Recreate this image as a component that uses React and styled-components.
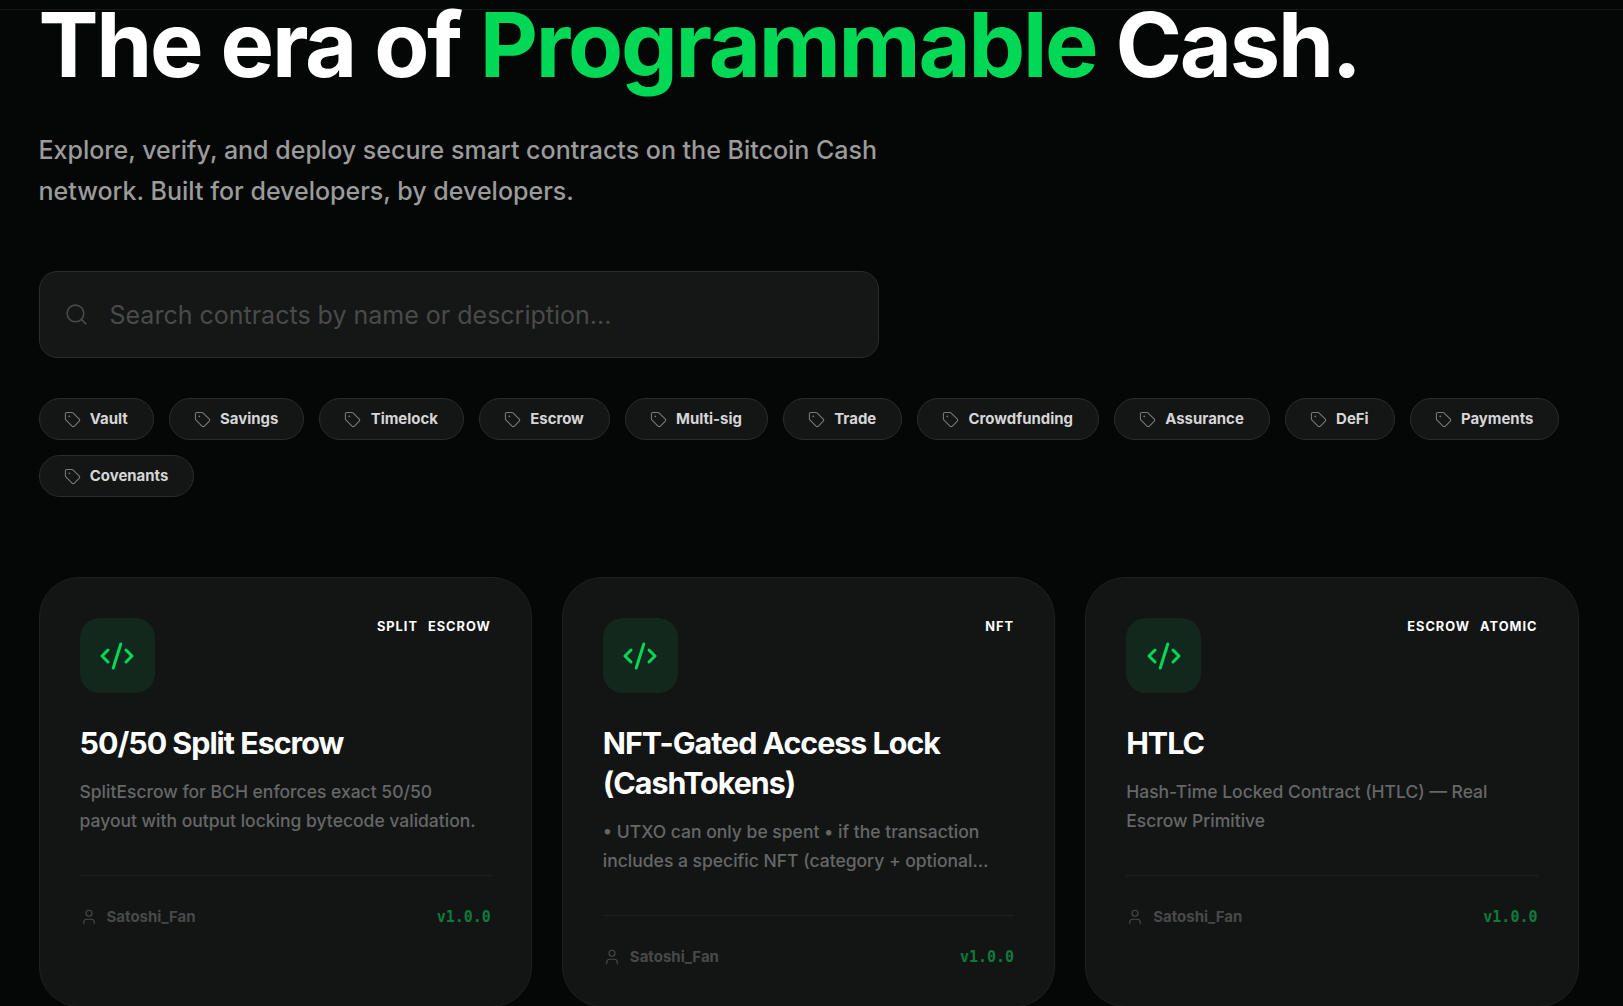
import React from "react";
import styled, { createGlobalStyle } from "styled-components";
import { Search, Tag, CodeXml, User } from "lucide-react";

const GlobalStyle = createGlobalStyle`
  * { box-sizing: border-box; }
  html, body {
    margin: 0;
    height: 1006px;
    overflow: hidden;
    background: #050707;
    font-family: Inter, "Liberation Sans", sans-serif;
  }
`;

const Page = styled.div`
  height: 1006px;
  overflow: hidden;
`;
const TopLine = styled.div`
  height: 10px;
  border-bottom: 1px solid #161818;
`;
const Main = styled.main`
  width: 1578.5px;
  padding-left: 38.5px;
`;
const Heading = styled.h1`
  margin: 0;
  height: 70px;
  font-size: 90px;
  line-height: 70px;
  font-weight: 700;
  letter-spacing: -2.25px;
  color: #fff;
  white-space: nowrap;
`;
const Accent = styled.span`
  color: #00d856;
`;
const Lead = styled.p`
  margin: 50px 0 0;
  width: 860px;
  font-size: 25px;
  line-height: 41px;
  font-weight: 500;
  color: #9b9b9b;
`;
const SearchBox = styled.div`
  margin-top: 59px;
  width: 840px;
  height: 87px;
  display: flex;
  align-items: center;
  gap: 21px;
  padding: 0 24px;
  background: #151616;
  border: 1px solid #2a2b2b;
  border-radius: 18px;
  color: #4a4a4a;
  font-size: 25px;
`;
const TagRow = styled.div`
  margin-top: 40px;
  display: flex;
  flex-wrap: wrap;
  gap: 15px;
`;
const TagPill = styled.button`
  height: 42px;
  display: flex;
  align-items: center;
  gap: 9.3px;
  padding: 0 25px 0 24px;
  background: #141515;
  border: 1px solid #2a2b2b;
  border-radius: 21px;
  color: #d6d6d6;
  font-family: inherit;
  font-size: 14.95px;
  font-weight: 700;
  svg {
    color: #7a7a7a;
  }
`;
const CardGrid = styled.div`
  margin-top: 80px;
  display: grid;
  grid-template-columns: repeat(3, 1fr);
  gap: 30px;
`;
const Card = styled.article`
  padding: 40px;
  background: #131515;
  border: 1px solid #1e2020;
  border-radius: 40px;
`;
const CardTop = styled.div`
  display: flex;
  justify-content: space-between;
  align-items: flex-start;
  margin-bottom: 30px;
`;
const IconBox = styled.div`
  width: 75px;
  height: 75px;
  display: flex;
  align-items: center;
  justify-content: center;
  background: #13281c;
  border-radius: 20px;
  color: #00d856;
`;
const Badges = styled.div`
  display: flex;
  gap: 10px;
  padding-top: 1px;
`;
const Badge = styled.span`
  font-size: 12.8px;
  line-height: 16px;
  font-weight: 700;
  letter-spacing: 1px;
  color: #fff;
`;
const CardTitle = styled.h3`
  margin: 0 0 14px;
  font-size: 30.4px;
  line-height: 40px;
  font-weight: 700;
  letter-spacing: -1px;
  color: #fff;
`;
const CardText = styled.p`
  margin: 0 0 40px;
  font-size: 17.5px;
  line-height: 29px;
  font-weight: 500;
  color: #666767;
  display: -webkit-box;
  -webkit-box-orient: vertical;
  -webkit-line-clamp: 2;
  overflow: hidden;
`;
const CardFooter = styled.div`
  display: flex;
  justify-content: space-between;
  align-items: center;
  padding-top: 31px;
  border-top: 1px solid #1f2121;
`;
const Author = styled.div`
  display: flex;
  align-items: center;
  gap: 9px;
  font-size: 15px;
  font-weight: 700;
  color: #484949;
`;
const Version = styled.span`
  font-family: "DejaVu Sans Mono", monospace;
  font-size: 15px;
  font-weight: 700;
  color: #0e7a3b;
`;

const tags = [
  "Vault",
  "Savings",
  "Timelock",
  "Escrow",
  "Multi-sig",
  "Trade",
  "Crowdfunding",
  "Assurance",
  "DeFi",
  "Payments",
  "Covenants",
];

const contracts = [
  {
    title: "50/50 Split Escrow",
    text: "SplitEscrow for BCH enforces exact 50/50 payout with output locking bytecode validation.",
    badges: ["SPLIT", "ESCROW"],
  },
  {
    title: "NFT-Gated Access Lock (CashTokens)",
    text: "• UTXO can only be spent • if the transaction includes a specific NFT (category + optional commitment) in its inputs.",
    badges: ["NFT"],
  },
  {
    title: "HTLC",
    text: "Hash-Time Locked Contract (HTLC) — Real Escrow Primitive",
    badges: ["ESCROW", "ATOMIC"],
  },
];

const App = () => {
  return (
    <Page>
      <GlobalStyle />
      <TopLine />
      <Main>
        <Heading>
          The era of <Accent>Programmable</Accent> Cash.
        </Heading>
        <Lead>
          Explore, verify, and deploy secure smart contracts on the Bitcoin Cash
          network. Built for developers, by developers.
        </Lead>
        <SearchBox>
          <Search size={25} strokeWidth={1.5} />
          <span>Search contracts by name or description...</span>
        </SearchBox>
        <TagRow>
          {tags.map((tag) => (
            <TagPill key={tag}>
              <Tag size={17} strokeWidth={1.5} />
              {tag}
            </TagPill>
          ))}
        </TagRow>
        <CardGrid>
          {contracts.map((item) => (
            <Card key={item.title}>
              <CardTop>
                <IconBox>
                  <CodeXml size={36} strokeWidth={2} />
                </IconBox>
                <Badges>
                  {item.badges.map((badge) => (
                    <Badge key={badge}>{badge}</Badge>
                  ))}
                </Badges>
              </CardTop>
              <CardTitle>{item.title}</CardTitle>
              <CardText>{item.text}</CardText>
              <CardFooter>
                <Author>
                  <User size={18} strokeWidth={1.5} />
                  Satoshi_Fan
                </Author>
                <Version>v1.0.0</Version>
              </CardFooter>
            </Card>
          ))}
        </CardGrid>
      </Main>
    </Page>
  );
};

export default App;
